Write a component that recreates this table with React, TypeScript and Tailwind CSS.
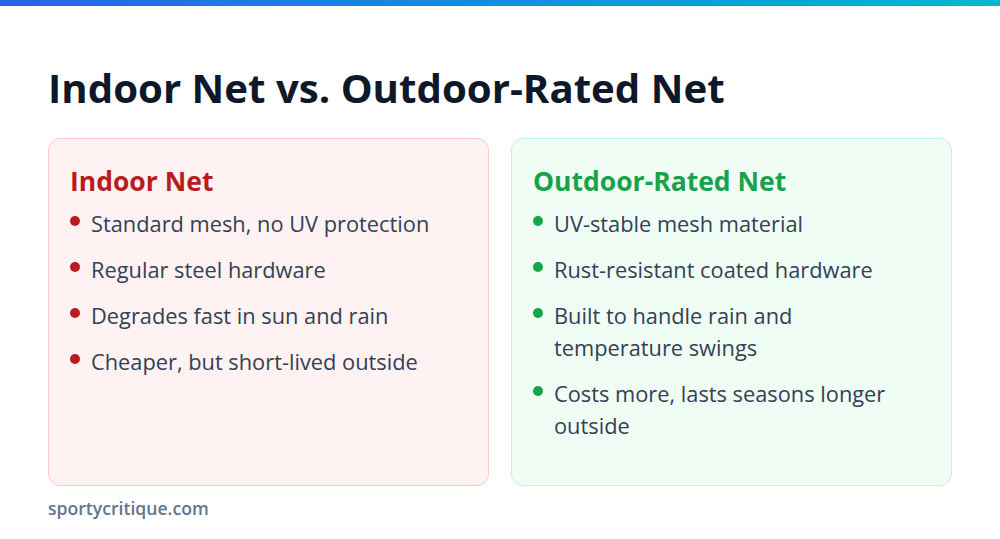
import React from "react";

const CARDS = [
  {
    title: "Indoor Net",
    box: "bg-[#fef2f2] border-[#fecaca]",
    head: "text-[#b91c1c]",
    dot: "bg-[#b91c1c]",
    items: [
      "Standard mesh, no UV protection",
      "Regular steel hardware",
      "Degrades fast in sun and rain",
      "Cheaper, but short-lived outside",
    ],
  },
  {
    title: "Outdoor-Rated Net",
    box: "bg-[#f0fdf4] border-[#bbf7d0]",
    head: "text-[#16a34a]",
    dot: "bg-[#16a34a]",
    items: [
      "UV-stable mesh material",
      "Rust-resistant coated hardware",
      "Built to handle rain and temperature swings",
      "Costs more, lasts seasons longer outside",
    ],
  },
];

export default function App() {
  return (
    <div
      className="w-[1000px] h-[539px] bg-white flex flex-col overflow-hidden"
      style={{ fontFamily: "'Open Sans', 'Noto Sans', sans-serif" }}
    >
      <div className="h-[6px] bg-gradient-to-r from-[#2563eb] to-[#06b6d4]" />
      <div className="flex-1 flex flex-col px-12 pt-[58px]">
        <h1 className="text-[40.2px] leading-[48px] font-bold text-[#0f172a]">
          Indoor Net vs. Outdoor-Rated Net
        </h1>
        <div className="grid grid-cols-2 gap-[22px] mt-[26px] h-[348px]">
          {CARDS.map((c) => (
            <div key={c.title} className={`rounded-xl border px-[21px] pt-[24px] ${c.box}`}>
              <h2 className={`text-[26.5px] leading-[36px] font-bold ${c.head}`}>{c.title}</h2>
              <ul className="mt-[9px] flex flex-col gap-[14px]">
                {c.items.map((it) => (
                  <li key={it} className="flex items-start gap-[11px] text-[21.8px] leading-[32px] text-[#334155]">
                    <span className={`mt-[8px] w-[10px] h-[10px] rounded-full shrink-0 ${c.dot}`} />
                    <span className="pr-1">{it}</span>
                  </li>
                ))}
              </ul>
            </div>
          ))}
        </div>
        <div className="mt-[9px] text-[17.6px] font-semibold text-[#64748b]">sportycritique.com</div>
      </div>
    </div>
  );
}
